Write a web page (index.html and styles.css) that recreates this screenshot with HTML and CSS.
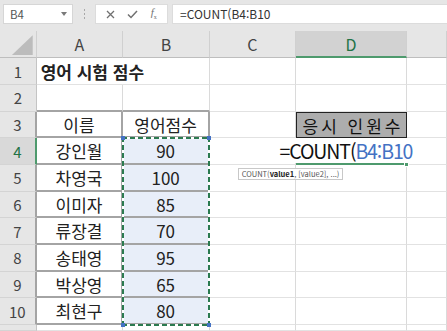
FILE: index.html
```
<!DOCTYPE html>
<html lang="ko">
<head>
    <meta charset="UTF-8">
    <title>영어 시험 점수</title>
    <link rel="stylesheet" href="styles.css">
</head>
<body>
    <div class="toolbar">
        <div class="name-box">
            <span>B4</span>
            <svg width="6" height="4" viewBox="0 0 6 4"><path d="M0 0h6L3 4z" fill="#7a7a7a"/></svg>
        </div>
        <div class="grip"><i></i><i></i><i></i></div>
        <div class="fx-box">
            <svg width="9" height="9" viewBox="0 0 9 9"><path d="M1 1l7 7M8 1L1 8" stroke="#707070" stroke-width="1.3" fill="none"/></svg>
            <svg width="11" height="9" viewBox="0 0 11 9"><path d="M1 4.5l3 3L10 1" stroke="#707070" stroke-width="1.5" fill="none"/></svg>
            <span class="fx"><i>f</i><sub>x</sub></span>
        </div>
        <div class="formula">=COUNT(B4:B10</div>
    </div>

    <div class="sheet">
        <!-- column headers -->
        <div class="hd corner"><span class="tri"></span></div>
        <div class="hd">A</div>
        <div class="hd">B</div>
        <div class="hd">C</div>
        <div class="hd active">D</div>
        <div class="hd"></div>

        <!-- row 1 -->
        <div class="rh">1</div>
        <div class="c title">영어 시험 점수</div>
        <div class="c"></div>
        <div class="c"></div>
        <div class="c"></div>
        <div class="c"></div>

        <!-- row 2 -->
        <div class="rh top">2</div>
        <div class="c top"></div>
        <div class="c top"></div>
        <div class="c"></div>
        <div class="c"></div>
        <div class="c"></div>

        <!-- row 3 -->
        <div class="rh tbl">3</div>
        <div class="c t">이름</div>
        <div class="c t">영어점수</div>
        <div class="c"></div>
        <div class="c label">응시 인원수</div>
        <div class="c"></div>

        <!-- row 4 -->
        <div class="rh tbl sel">4</div>
        <div class="c t">강인월</div>
        <div class="c t num ref">90
            <div class="ants"><b class="tl"></b><b class="tr"></b><b class="bl"></b><b class="br"></b></div>
        </div>
        <div class="c"></div>
        <div class="c editing">
            <div class="editor">=COUNT(<span class="ref-text">B4:B10</span><span class="caret"></span></div>
            <div class="tip">COUNT(<b>value1</b>, [value2], ...)</div>
            <span class="handle"></span>
        </div>
        <div class="c"></div>

        <!-- row 5 -->
        <div class="rh tbl">5</div>
        <div class="c t">차영국</div>
        <div class="c t num">100</div>
        <div class="c"></div>
        <div class="c"></div>
        <div class="c"></div>

        <!-- row 6 -->
        <div class="rh tbl">6</div>
        <div class="c t">이미자</div>
        <div class="c t num">85</div>
        <div class="c"></div>
        <div class="c"></div>
        <div class="c"></div>

        <!-- row 7 -->
        <div class="rh tbl">7</div>
        <div class="c t">류장결</div>
        <div class="c t num">70</div>
        <div class="c"></div>
        <div class="c"></div>
        <div class="c"></div>

        <!-- row 8 -->
        <div class="rh tbl">8</div>
        <div class="c t">송태영</div>
        <div class="c t num">95</div>
        <div class="c"></div>
        <div class="c"></div>
        <div class="c"></div>

        <!-- row 9 -->
        <div class="rh tbl">9</div>
        <div class="c t">박상영</div>
        <div class="c t num">65</div>
        <div class="c"></div>
        <div class="c"></div>
        <div class="c"></div>

        <!-- row 10 -->
        <div class="rh tbl">10</div>
        <div class="c t">최현구</div>
        <div class="c t num">80</div>
        <div class="c"></div>
        <div class="c"></div>
        <div class="c"></div>

        <!-- row 11 (cut off) -->
        <div class="rh"></div>
        <div class="c"></div>
        <div class="c"></div>
        <div class="c"></div>
        <div class="c"></div>
        <div class="c"></div>
    </div>
</body>
</html>
```

FILE: styles.css
```
* {
    box-sizing: border-box;
}
body {
    margin: 0;
    width: 447px;
    height: 331px;
    overflow: hidden;
    background-color: #fff;
    font-family: "Noto Sans CJK KR", "Noto Sans", sans-serif;
    color: #222;
}

/* formula bar */
.toolbar {
    height: 31px;
    background-color: #e6e6e6;
    display: flex;
    align-items: flex-start;
    padding: 4px 0 0 3px;
}
.name-box {
    width: 70px;
    height: 20px;
    background-color: #fff;
    border: 1px solid #d6d6d6;
    display: flex;
    align-items: center;
    justify-content: space-between;
    padding: 0 5px 0 6px;
    font-size: 11.5px;
    color: #555;
}
.grip {
    width: 22px;
    height: 20px;
    display: flex;
    flex-direction: column;
    align-items: center;
    justify-content: center;
    gap: 2px;
}
.grip i {
    width: 1px;
    height: 2px;
    background-color: #a8a8a8;
}
.fx-box {
    width: 73px;
    height: 20px;
    background-color: #fff;
    border: 1px solid #dcdcdc;
    display: flex;
    align-items: center;
    justify-content: space-around;
    padding: 0 4px;
}
.fx {
    font-family: "Liberation Serif", serif;
    font-size: 11px;
    color: #707070;
    line-height: 1;
}
.fx sub {
    font-size: 6px;
}
.formula {
    flex: 1;
    height: 20px;
    margin-left: 4px;
    background-color: #fff;
    border: 1px solid #dcdcdc;
    border-right: none;
    padding-left: 7px;
    font-size: 12px;
    line-height: 18px;
    color: #333;
}

/* grid */
.sheet {
    display: grid;
    grid-template-columns: 36.7px 86.6px 86.7px 85.7px 111.7px 1fr;
    grid-template-rows: 27.3px repeat(10, 26.7px) 1fr;
    height: 300px;
}
.hd {
    background-color: #e6e6e6;
    border-right: 1px solid #d0d0d0;
    border-bottom: 1px solid #bebebe;
    display: flex;
    align-items: center;
    justify-content: center;
    font-size: 16px;
    color: #444;
}
.hd.active {
    background-color: #d2d2d2;
    color: #217346;
    border-bottom: 2px solid #4e9a6d;
}
.corner {
    position: relative;
}
.corner .tri {
    position: absolute;
    right: 3px;
    bottom: 2px;
    width: 21px;
    height: 20px;
    background-color: #bcbcbc;
    clip-path: polygon(100% 0, 100% 100%, 0 100%);
}
.rh {
    background-color: #e6e6e6;
    border-right: 1px solid #c4c4c4;
    border-bottom: 1px solid #d4d4d4;
    display: flex;
    align-items: center;
    justify-content: center;
    font-size: 15px;
    color: #444;
}
.rh.tbl {
    border-right: 2px solid #a4a4a4;
}
.rh.sel {
    background-color: #d9d9d9;
    color: #217346;
    border-right: 2px solid #4e9a6d;
}
.c {
    border-right: 1px solid #dadada;
    border-bottom: 1px solid #e2e2e2;
    display: flex;
    align-items: center;
    justify-content: center;
    font-size: 17px;
    white-space: nowrap;
}
.c.top {
    border-bottom: 2px solid #a4a4a4;
}
.c.t {
    border-right: 2px solid #a4a4a4;
    border-bottom: 2px solid #a4a4a4;
}
.title {
    justify-content: flex-start;
    padding-left: 4px;
    font-weight: bold;
    border-right: none;
    position: relative;
    z-index: 1;
}
.num {
    background-color: #e8eef9;
}
.ref {
    position: relative;
}
.ants {
    position: absolute;
    left: -1px;
    top: -1px;
    width: 88px;
    height: 189px;
    background:
        repeating-linear-gradient(90deg, #2b7a50 0 5px, #fff 5px 8px) top / 100% 2px no-repeat,
        repeating-linear-gradient(90deg, #2b7a50 0 5px, #fff 5px 8px) bottom / 100% 2px no-repeat,
        repeating-linear-gradient(180deg, #2b7a50 0 5px, #fff 5px 8px) left / 2px 100% no-repeat,
        repeating-linear-gradient(180deg, #2b7a50 0 5px, #fff 5px 8px) right / 2px 100% no-repeat;
    z-index: 2;
}
.ants b {
    position: absolute;
    width: 4px;
    height: 4px;
    background-color: #4472c4;
}
.ants .tl { left: -1px; top: -1px; }
.ants .tr { right: -1px; top: -1px; }
.ants .bl { left: -1px; bottom: -1px; }
.ants .br { right: -1px; bottom: -1px; }

/* D3 / D4 */
.label {
    background-color: #adadad;
    border: 1.5px solid #222;
    letter-spacing: 3px;
    padding-left: 3px;
    color: #111;
}
.editing {
    position: relative;
    border-bottom: 2px solid #4e9a6d;
}
.editor {
    position: absolute;
    left: -12px;
    right: -12px;
    top: 0;
    bottom: 0;
    background-color: #fff;
    display: flex;
    align-items: center;
    justify-content: flex-end;
    padding-right: 3px;
    font-size: 19.5px;
    letter-spacing: -1.1px;
    color: #111;
    z-index: 3;
}
.ref-text {
    color: #4472c4;
}
.caret {
    width: 1px;
    height: 22px;
    margin-left: 3px;
    background-color: #111;
}
.handle {
    position: absolute;
    right: -3px;
    bottom: -4px;
    width: 5px;
    height: 5px;
    background-color: #4e9a6d;
    border: 1px solid #fff;
    z-index: 4;
}
.tip {
    position: absolute;
    left: -58px;
    top: 30px;
    height: 12px;
    padding: 0 3px;
    background-color: #fff;
    border: 1px solid #c8c8c8;
    font-size: 7.5px;
    line-height: 10px;
    color: #555;
    z-index: 4;
}
.tip b {
    color: #222;
}
```
